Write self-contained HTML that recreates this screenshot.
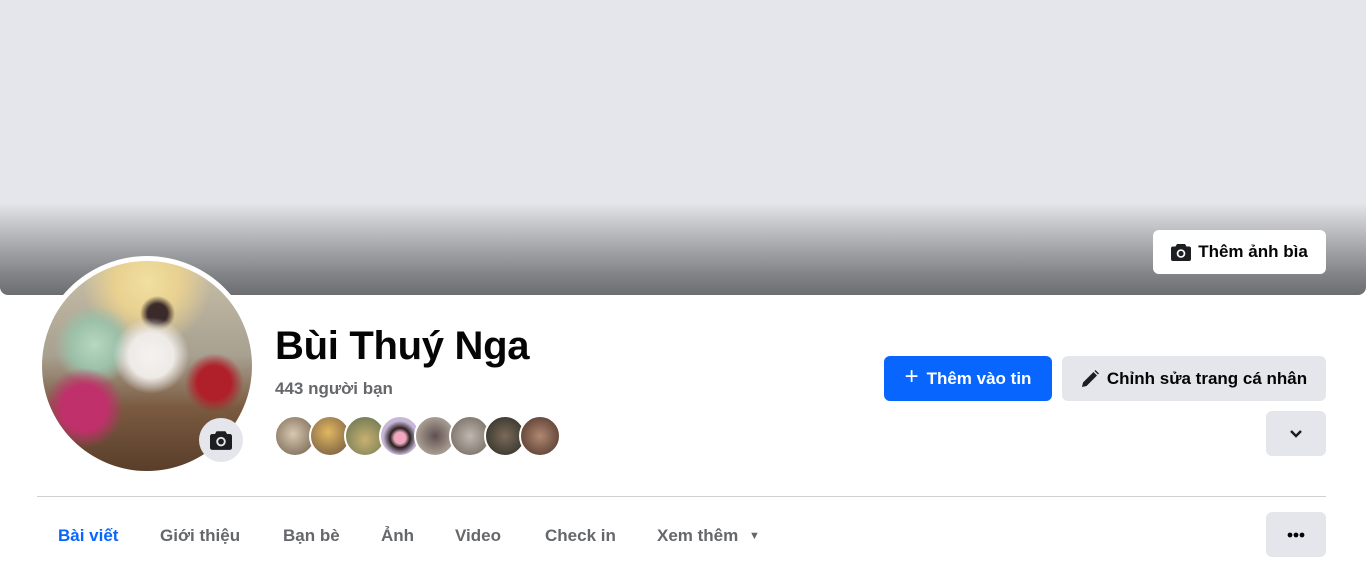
<!DOCTYPE html>
<html><head><meta charset="utf-8"><style>
*{margin:0;padding:0;box-sizing:border-box}
body{width:1367px;height:568px;background:#fff;font-family:"Liberation Sans",sans-serif;position:relative;overflow:hidden}
.cover{position:absolute;left:0;top:0;width:1366px;height:295px;border-radius:0 0 8px 8px;background:linear-gradient(to bottom,#e4e6eb 0,#e4e6eb 203px,#c9cacd 222px,#a2a3a6 250px,#828386 275px,#6c6d70 295px)}
.btn{position:absolute;border-radius:6px;font-weight:bold;font-size:17px;display:flex;align-items:center;justify-content:center}
.avatar{position:absolute;left:37px;top:256px;width:220px;height:220px;border-radius:50%;background:#fff;padding:5px}
.avatar .img{width:100%;height:100%;border-radius:50%;background:
radial-gradient(circle at 20% 70%,#c0306a 0,#c0306a 10%,transparent 18%),
radial-gradient(circle at 82% 58%,#b0202a 0,#b0202a 8%,transparent 14%),
radial-gradient(circle at 52% 45%,#f4f2f0 0,#eeeae6 14%,transparent 24%),
radial-gradient(circle at 55% 25%,#3a2a2a 0,#3a2a2a 5%,transparent 9%),
radial-gradient(circle at 25% 40%,#b8d8c0 0,#9cc0a8 12%,transparent 20%),
radial-gradient(circle at 50% 10%,#f0e0a0 0,#e8d090 15%,transparent 30%),
linear-gradient(to bottom,#c8c0a8 0,#a8a090 45%,#7a5a40 70%,#5a3e2a 100%)}
.cam{position:absolute;left:199px;top:418px;width:44px;height:44px;border-radius:50%;background:#e4e6eb;display:flex;align-items:center;justify-content:center}
.fr{position:absolute;top:415px;width:42px;height:42px;border-radius:50%;border:2px solid #fff}
.tabs{position:absolute;top:526px;font-size:17px;font-weight:bold;color:#65676b}
</style></head><body>
<div class="cover"></div>
<div class="btn" style="left:1153px;top:230px;width:173px;height:44px;background:#fff;color:#050505">
<svg width="20" height="18" viewBox="0 0 20 18" style="margin-right:7px"><path d="M6 1h8l1.5 2.5H18a2 2 0 0 1 2 2V16a2 2 0 0 1-2 2H2a2 2 0 0 1-2-2V5.5a2 2 0 0 1 2-2h2.5z" fill="#1c1e21"/><circle cx="10" cy="10.5" r="4.3" fill="#fff"/><circle cx="10" cy="10.5" r="2.6" fill="#1c1e21"/></svg>Thêm ảnh bìa</div>
<div class="avatar"><div class="img"></div></div>
<div class="cam"><svg width="22" height="20" viewBox="0 0 20 18"><path d="M6 1h8l1.5 2.5H18a2 2 0 0 1 2 2V16a2 2 0 0 1-2 2H2a2 2 0 0 1-2-2V5.5a2 2 0 0 1 2-2h2.5z" fill="#1c1e21"/><circle cx="10" cy="10.5" r="4.3" fill="#e4e6eb"/><circle cx="10" cy="10.5" r="2.6" fill="#1c1e21"/></svg></div>
<div style="position:absolute;left:275px;top:324px;font-size:40px;font-weight:bold;color:#050505;letter-spacing:-0.3px">Bùi Thuý Nga</div>
<div style="position:absolute;left:275px;top:379px;font-size:17px;font-weight:bold;color:#65676b">443 người bạn</div>
<div class="fr" style="left:274px;background:radial-gradient(circle at 45% 45%,#d8c8b0,#6a5a48)"></div>
<div class="fr" style="left:309px;background:radial-gradient(circle at 45% 40%,#e0b860,#6a5040)"></div>
<div class="fr" style="left:344px;background:radial-gradient(circle at 50% 60%,#c8b070,#607050)"></div>
<div class="fr" style="left:379px;background:radial-gradient(circle at 50% 55%,#f0a8c0 0,#f0a8c0 20%,#2a2020 35%,#c8b8d8 60%)"></div>
<div class="fr" style="left:414px;background:radial-gradient(circle at 50% 50%,#605050,#c8c0b0)"></div>
<div class="fr" style="left:449px;background:radial-gradient(circle at 50% 50%,#c0b8b0,#6a6058)"></div>
<div class="fr" style="left:484px;background:radial-gradient(circle at 50% 50%,#7a6a5a,#2a2a22)"></div>
<div class="fr" style="left:519px;background:radial-gradient(circle at 50% 50%,#b08870,#4a3028)"></div>
<div class="btn" style="left:884px;top:356px;width:168px;height:45px;background:#0866ff;color:#fff"><span style="font-size:24px;font-weight:normal;margin-right:8px;margin-top:-3px">+</span>Thêm vào tin</div>
<div class="btn" style="left:1062px;top:356px;width:264px;height:45px;background:#e4e6eb;color:#050505">
<svg width="18" height="18" viewBox="0 0 18 18" style="margin-right:8px"><path d="M1 17l1-4.5L12.5 2l3.5 3.5L5.5 16z M13.5 1l1-1 3.5 3.5-1 1z" fill="#1c1e21"/></svg>Chỉnh sửa trang cá nhân</div>
<div class="btn" style="left:1266px;top:411px;width:60px;height:45px;background:#e4e6eb"><svg width="14" height="10" viewBox="0 0 14 10"><path d="M2 2l5 5 5-5" stroke="#1c1e21" stroke-width="2.5" fill="none"/></svg></div>
<div style="position:absolute;left:37px;top:496px;width:1289px;height:1px;background:#ced0d4"></div>
<div class="tabs" style="left:58px;color:#0866ff">Bài viết</div>
<div class="tabs" style="left:160px">Giới thiệu</div>
<div class="tabs" style="left:283px">Bạn bè</div>
<div class="tabs" style="left:381px">Ảnh</div>
<div class="tabs" style="left:455px">Video</div>
<div class="tabs" style="left:545px">Check in</div>
<div class="tabs" style="left:657px">Xem thêm <span style="font-size:11px;position:relative;top:-2px;margin-left:6px">▼</span></div>
<div class="btn" style="left:1266px;top:512px;width:60px;height:45px;background:#e4e6eb"><svg width="18" height="6" viewBox="0 0 18 6"><circle cx="3" cy="3" r="2.4" fill="#050505"/><circle cx="9" cy="3" r="2.4" fill="#050505"/><circle cx="15" cy="3" r="2.4" fill="#050505"/></svg></div>
</body></html>
